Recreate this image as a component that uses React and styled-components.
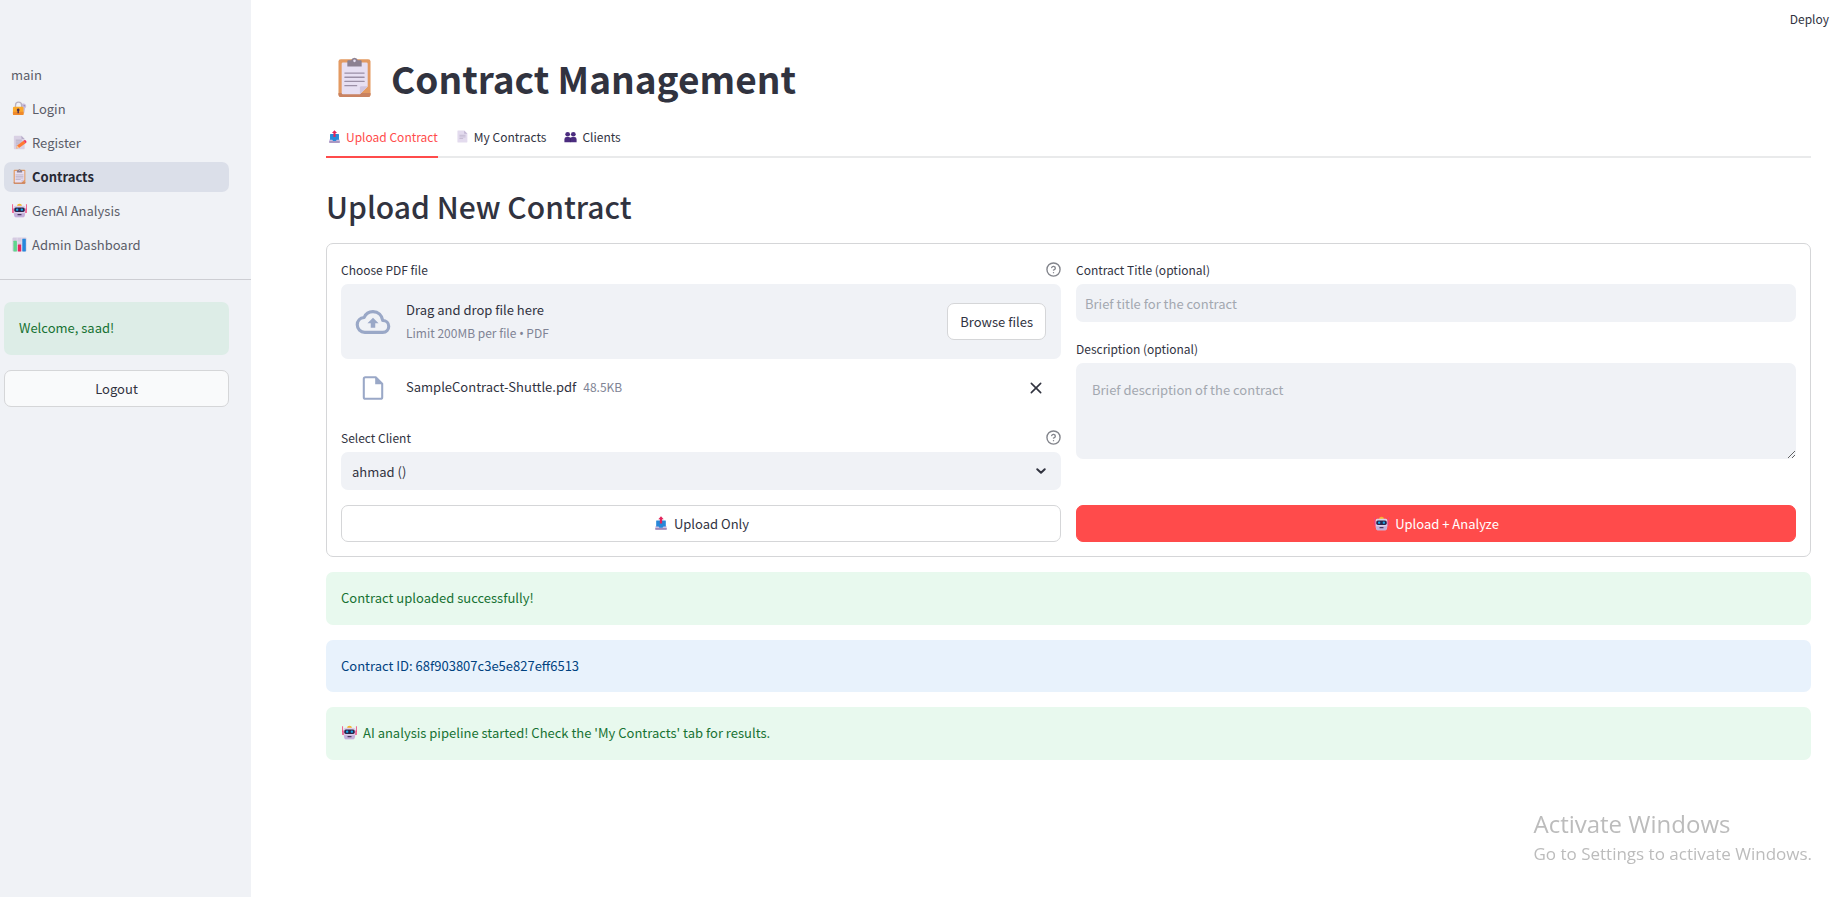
import React, { useState } from "react";
import styled, { createGlobalStyle, css } from "styled-components";

const color = {
  text: "#31333f",
  muted: "#808495",
  faint: "#a3a8b0",
  panel: "#f0f2f6",
  line: "#d5d6d8",
  red: "#ff4b4b",
  icon: "#9aa8c7",
};

const GlobalStyle = createGlobalStyle`
  *, *::before, *::after { box-sizing: border-box; }
  body {
    margin: 0;
    background: #fff;
    color: ${color.text};
    font-family: "Noto Sans CJK SC", "Noto Sans", sans-serif;
    font-size: 13px;
    line-height: 23px;
  }
  button, input, select, textarea { font: inherit; color: inherit; }
  h1, h2, p { margin: 0; }
`;

/* ---------- emoji drawings ---------- */

const Emoji = styled.svg.attrs({ viewBox: "0 0 32 32", "aria-hidden": true })`
  flex: none;
  display: block;
  width: ${(p) => p.$size || 15}px;
  height: ${(p) => p.$size || 15}px;
  margin: 0 1px;
`;

const Clipboard = ({ size }) => (
  <Emoji $size={size}>
    <rect x="3.5" y="1.8" width="25" height="29.4" rx="1.8" fill="#e39a62" />
    <path d="M3.5 28h25v1.4a1.8 1.8 0 0 1-1.8 1.8H5.3a1.8 1.8 0 0 1-1.8-1.8z" fill="#c98261" />
    <path d="M7 4.300h18.300a1 1 0 0 1 1 1V23L20.200 29H7a1 1 0 0 1-1-1V5.300a1 1 0 0 1 1-1z" fill="#e7dff2" />
    <path d="M20.200 29v-5.200a1 1 0 0 1 1-1h5.100z" fill="#cfc3de" />
    <path d="M13.400 2.600a2.700 2.700 0 0 1 5.200 0h2.200a.8.8 0 0 1 .8.8v4.100H10.400V3.400a.8.8 0 0 1 .8-.8z" fill="#8c8091" />
    <circle cx="16" cy="3" r="1" fill="#e7dff2" />
    <path d="M8.500 12.500h15M8.500 15.800h15M8.500 19.100h15M8.500 22.400h9.200" stroke="#9b8fa6" strokeWidth="1" strokeLinecap="round" />
  </Emoji>
);

const LockKey = () => (
  <Emoji>
    <path d="M25 5.500a5.500 5.500 0 0 1 3 10l-1.500 9-3 3.500-3-4V6.800a5 5 0 0 1 4.500-1.300z" fill="#c9bddb" />
    <circle cx="26" cy="10" r="1.500" fill="#8f83a6" />
    <path d="M7.500 14V9a6.500 6.500 0 0 1 13 0v5" fill="none" stroke="#b9b2c2" strokeWidth="2.800" />
    <rect x="2" y="12.500" width="22.500" height="17.500" rx="2.500" fill="#fba92c" />
    <path d="M2 23h22.500v4.500A2.500 2.500 0 0 1 22 30H4.500A2.500 2.500 0 0 1 2 27.500z" fill="#f08a2b" />
    <path d="M13.200 16.200a2.900 2.900 0 0 1 1.500 5.400V26h-3v-4.400a2.900 2.900 0 0 1 1.500-5.400z" fill="#4a3050" />
  </Emoji>
);

const Memo = () => (
  <Emoji>
    <path d="M5.500 1.500H20l7 7V29a1.500 1.500 0 0 1-1.500 1.500h-20A1.500 1.500 0 0 1 4 29V3a1.500 1.500 0 0 1 1.500-1.500z" fill="#d9d1e4" />
    <path d="M20 1.500l7 7h-5.500A1.500 1.500 0 0 1 20 7z" fill="#b8adc9" />
    <path d="M8 11h13M8 15h13M8 19h8M8 23h5" stroke="#a79bb5" strokeWidth="1.400" />
    <path d="M9 29l2-6.500L24.500 12.500l4.500 5L15.500 27.300z" fill="#ff7a32" />
    <path d="M24.500 12.500l2-1.400c2-1.400 5.500 2.800 4.200 4.700L29 17.500z" fill="#f0325f" />
    <path d="M9 29l2-6.500 4.500 4.800z" fill="#f4c9a2" />
  </Emoji>
);

const Robot = () => (
  <Emoji>
    <path d="M1.200 3.500v10M30.800 3.500v10" stroke="#f0427c" strokeWidth="1.800" strokeLinecap="round" />
    <rect x="0.500" y="11.500" width="5" height="10" rx="1.500" fill="#f0427c" />
    <rect x="26.500" y="11.500" width="5" height="10" rx="1.500" fill="#f0427c" />
    <path d="M11 5.500a5 3.800 0 0 1 10 0v2H11z" fill="#f6b52e" />
    <path d="M7 6h18a3.500 3.500 0 0 1 3.500 3.500V20c0 3-1 10.500-4.500 10.500H8C4.500 30.500 3.500 23 3.500 20V9.500A3.500 3.500 0 0 1 7 6z" fill="#dccfe8" />
    <path d="M4 22h24c-.5 4-1.500 8.500-4 8.500H8C5.500 30.500 4.500 26 4 22z" fill="#c3aeda" />
    <rect x="4.800" y="9.500" width="22.400" height="9.500" rx="3.500" fill="#29234a" />
    <circle cx="11" cy="14.200" r="2.500" fill="#1ba8e8" />
    <circle cx="21" cy="14.200" r="2.500" fill="#1ba8e8" />
    <rect x="11.500" y="23.500" width="9" height="2.800" rx="1.400" fill="#4c3a61" />
  </Emoji>
);

const BarChart = () => (
  <Emoji>
    <rect x="1" y="1" width="30" height="30" rx="2.500" fill="#d5cbe1" />
    <path d="M1 11h30M1 21h30M11 1v30M21 1v30" stroke="#eee9f4" strokeWidth="1" />
    <rect x="3" y="8" width="7.500" height="23" rx="1" fill="#5fd68c" />
    <rect x="12.500" y="16" width="7" height="15" rx="1" fill="#e7265e" />
    <rect x="22" y="3.500" width="7.500" height="27.500" rx="1" fill="#2588dc" />
  </Emoji>
);

const Outbox = ({ size }) => (
  <Emoji $size={size}>
    <path d="M5 23l2.500-3h17l2.500 3 2 1v6a1.500 1.500 0 0 1-1.500 1.500h-23A1.500 1.500 0 0 1 3 30v-6z" fill="#cdbfe0" />
    <path d="M3 27.500h26V30a1.500 1.500 0 0 1-1.500 1.500h-23A1.500 1.500 0 0 1 3 30z" fill="#9d88b9" />
    <path d="M6 10h20a1 1 0 0 1 1 1v13h-5.500l-2 3h-7l-2-3H5V11a1 1 0 0 1 1-1z" fill="#2788d9" />
    <path d="M16 .8l6.200 6.700H18.600V17h-5.200V7.500H9.800z" fill="#e3245b" />
  </Emoji>
);

const PageIcon = ({ size }) => (
  <Emoji $size={size}>
    <path d="M4.500 1.500H20l8 8V29.500a1 1 0 0 1-1 1h-22.500a1 1 0 0 1-1-1V2.500a1 1 0 0 1 1-1z" fill="#e3dbee" />
    <path d="M20 1.500l8 8h-7a1 1 0 0 1-1-1z" fill="#c4b8d5" />
    <path d="M8.500 13h15M8.500 17h15M8.500 21h9" stroke="#aba0bb" strokeWidth="1.300" />
  </Emoji>
);

const People = ({ size }) => (
  <Emoji $size={size}>
    <circle cx="9" cy="10.500" r="5.800" fill="#4b2c7f" />
    <circle cx="23" cy="10.500" r="5.800" fill="#4b2c7f" />
    <path d="M1 30v-7.500A5.500 5.500 0 0 1 6.500 17h5a5.500 5.500 0 0 1 4.500 2.300A5.500 5.500 0 0 1 20.500 17h5a5.500 5.500 0 0 1 5.500 5.500V30z" fill="#4b2c7f" />
    <path d="M16 19.300V30" stroke="#321b5a" strokeWidth="1" />
  </Emoji>
);

/* ---------- line icons ---------- */

const Glyph = styled.svg.attrs({ viewBox: "0 0 24 24", "aria-hidden": true })`
  flex: none;
  display: block;
  width: ${(p) => p.$size}px;
  height: ${(p) => p.$size}px;
`;

const CloudIcon = () => (
  <Glyph $size={36} fill="none">
    <path d="M18.500 11C18 7.500 15.500 5.100 12 5.100c-2.700 0-4.900 1.500-5.900 3.900C3.300 9.200 1.500 11.300 1.500 13.900c0 2.800 2.200 5 5 5h12c2.300 0 4-1.700 4-4 0-2.200-1.800-3.900-4-3.900z" stroke={color.icon} strokeWidth="2.100" strokeLinejoin="round" />
    <path d="M8.300 12.900h2.200v2.900h3v-2.900h2.200L12 9.200z" fill={color.icon} />
  </Glyph>
);

const FileIcon = () => (
  <Glyph $size={26}>
    <path d="M5 2h9.500L20.500 8v12.500A1.500 1.500 0 0 1 19 22H5a1.500 1.500 0 0 1-1.500-1.500v-17A1.500 1.500 0 0 1 5 2z" fill="none" stroke={color.icon} strokeWidth="1.900" strokeLinejoin="round" />
    <path d="M14 2v6.500h6.500z" fill={color.icon} />
  </Glyph>
);

const CloseIcon = () => (
  <Glyph $size={16}>
    <path d="M5 5l14 14M19 5l-14 14" stroke={color.text} strokeWidth="2.400" strokeLinecap="round" />
  </Glyph>
);

const HelpIcon = () => (
  <Glyph $size={15} fill="none" stroke="#83858c" strokeWidth="2.200" strokeLinecap="round" strokeLinejoin="round">
    <circle cx="12" cy="12" r="10.500" />
    <path d="M9.090 9a3 3 0 0 1 5.830 1c0 2-3 3-3 3M12 17h.01" />
  </Glyph>
);

const ChevronIcon = () => (
  <Glyph $size={12}>
    <path d="M4.500 8.500l7.500 7 7.500-7" fill="none" stroke={color.text} strokeWidth="4" strokeLinecap="round" strokeLinejoin="round" />
  </Glyph>
);

/* ---------- shell ---------- */

const Shell = styled.div`
  display: flex;
  min-height: 100vh;
`;

const Sidebar = styled.aside`
  flex: 0 0 251px;
  background: ${color.panel};
  padding-top: 60px;
`;

const Nav = styled.nav`
  display: flex;
  flex-direction: column;
  gap: 4px;
  padding: 0 22px 0 4px;
`;

const NavLink = styled.a`
  display: flex;
  align-items: center;
  gap: 4px;
  height: 30px;
  padding: 0 7px 2px;
  border-radius: 7px;
  color: #5b5d68;
  text-decoration: none;
  ${(p) =>
    p.$active &&
    css`
      background: #dbdfe9;
      color: #262833;
      font-weight: 600;
    `}
`;

const Divider = styled.hr`
  margin: 19px 0 22px;
  border: 0;
  border-top: 1px solid #cdced3;
`;

const SidebarBody = styled.div`
  display: flex;
  flex-direction: column;
  gap: 15px;
  padding: 0 22px 0 4px;
`;

const Main = styled.main`
  flex: 1;
  min-width: 0;
  display: flex;
  flex-direction: column;
  padding: 0 29px 40px 75px;
`;

const TopBar = styled.header`
  display: flex;
  justify-content: flex-end;
  height: 38px;
  margin-right: -18px;
`;

const DeployButton = styled.button`
  height: 37px;
  padding: 0;
  border: 0;
  background: none;
  font-size: 12px;
`;

const Title = styled.h1`
  display: flex;
  align-items: center;
  gap: 15px;
  height: 80px;
  padding: 0 0 1px 7px;
  font-size: 37px;
  line-height: 48px;
  font-weight: 700;
`;

const Tabs = styled.div`
  display: flex;
  gap: 16px;
  height: 40px;
  border-bottom: 2px solid #e9eaeb;
`;

const Tab = styled.button`
  display: flex;
  align-items: center;
  gap: 4px;
  height: 40px;
  padding: 0 0 1px 1px;
  border: 0;
  border-bottom: 2px solid ${(p) => (p.$active ? color.red : "transparent")};
  background: none;
  color: ${(p) => (p.$active ? color.red : color.text)};
  font-size: 12px;
`;

const Heading = styled.h2`
  margin: 28px 0 16px;
  font-size: 30px;
  line-height: 41px;
  font-weight: 500;
`;

/* ---------- form ---------- */

const Card = styled.form`
  display: flex;
  flex-direction: column;
  gap: 15px;
  padding: 14px;
  border: 1px solid ${color.line};
  border-radius: 7px;
`;

const Columns = styled.div`
  display: grid;
  grid-template-columns: 1fr 1fr;
  gap: 15px;
`;

const Column = styled.div`
  display: flex;
  flex-direction: column;
  gap: 15px;
`;

const Field = styled.div`
  display: flex;
  flex-direction: column;
`;

const LabelRow = styled.div`
  display: flex;
  align-items: center;
  justify-content: space-between;
  height: 26px;
  padding-bottom: 4px;
`;

const Label = styled.label`
  font-size: 12px;
`;

const HelpButton = styled.button`
  padding: 0;
  border: 0;
  background: none;
`;

const Button = styled.button`
  display: flex;
  align-items: center;
  justify-content: center;
  gap: 5px;
  height: 37px;
  padding: 0 12px 1px;
  border: 1px solid ${(p) => (p.$primary ? color.red : color.line)};
  border-radius: 7px;
  background: ${(p) => (p.$primary ? color.red : p.$soft ? "#f9fafb" : "#fff")};
  color: ${(p) => (p.$primary ? "#fff" : color.text)};
`;

const Dropzone = styled.div`
  display: flex;
  align-items: center;
  gap: 15px;
  height: 75px;
  padding: 0 15px 0 14px;
  border-radius: 7px;
  background: ${color.panel};
`;

const DropText = styled.div`
  flex: 1;
`;

const Hint = styled.p`
  color: ${color.muted};
  font-size: 12px;
`;

const Bullet = styled.span`
  font-family: "Noto Sans", sans-serif;
`;

const FileRow = styled.div`
  display: flex;
  align-items: center;
  gap: 7px;
  height: 52px;
  padding: 6px 17px 0 19px;
`;

const FileName = styled.span`
  margin-left: 13px;
  padding-bottom: 4px;
`;

const FileSize = styled.span`
  flex: 1;
  padding-bottom: 4px;
  color: ${color.muted};
  font-size: 12px;
`;

const RemoveButton = styled.button`
  padding: 0;
  border: 0;
  background: none;
`;

const control = css`
  width: 100%;
  border: 0;
  border-radius: 7px;
  background: ${color.panel};
  outline: none;
  &::placeholder { color: ${color.faint}; opacity: 1; }
`;

const TextInput = styled.input`
  ${control}
  height: 38px;
  padding: 0 9px;
`;

const TextArea = styled.textarea`
  ${control}
  display: block;
  height: 96px;
  padding: 15px 16px;
  resize: vertical;
`;

const SelectWrap = styled.div`
  display: grid;
  align-items: center;
  & > * { grid-area: 1 / 1; }
  & > svg { justify-self: end; margin-right: 14px; pointer-events: none; }
`;

const Select = styled.select`
  ${control}
  appearance: none;
  height: 38px;
  padding: 0 11px;
`;

/* ---------- messages ---------- */

const Messages = styled.div`
  display: flex;
  flex-direction: column;
  gap: 15px;
  margin-top: 15px;
`;

const tones = {
  success: ["#e8f9ee", "#177233"],
  info: ["#e8f2fc", "#004280"],
  sidebar: ["#ddede7", "#177233"],
};

const Alert = styled.div`
  display: flex;
  align-items: center;
  gap: 5px;
  min-height: ${(p) => (p.$tone === "info" ? 52 : 53)}px;
  padding: 0 15px 2px;
  border-radius: 7px;
  background: ${(p) => tones[p.$tone][0]};
  color: ${(p) => tones[p.$tone][1]};
`;

const Watermark = styled.div`
  position: fixed;
  right: 28px;
  bottom: 30px;
  color: #bcbcbc;
  font-family: "Open Sans", "Noto Sans", sans-serif;
  pointer-events: none;
`;

const WatermarkTitle = styled.p`
  font-size: 24px;
  line-height: 34px;
`;

const WatermarkText = styled.p`
  font-size: 17px;
  line-height: 26px;
`;

const pages = [
  { name: "main" },
  { name: "Login", Icon: LockKey },
  { name: "Register", Icon: Memo },
  { name: "Contracts", Icon: Clipboard },
  { name: "GenAI Analysis", Icon: Robot },
  { name: "Admin Dashboard", Icon: BarChart },
];

const tabs = [
  { name: "Upload Contract", Icon: Outbox },
  { name: "My Contracts", Icon: PageIcon },
  { name: "Clients", Icon: People },
];

export default function App() {
  const [tab, setTab] = useState("Upload Contract");
  return (
    <>
      <GlobalStyle />
      <Shell>
        <Sidebar>
          <Nav aria-label="Pages">
            {pages.map(({ name, Icon }) => (
              <NavLink key={name} href="#" $active={name === "Contracts"}>
                {Icon && <Icon />}
                {name}
              </NavLink>
            ))}
          </Nav>
          <Divider />
          <SidebarBody>
            <Alert $tone="sidebar">Welcome, saad!</Alert>
            <Button type="button" $soft>Logout</Button>
          </SidebarBody>
        </Sidebar>

        <Main>
          <TopBar>
            <DeployButton type="button">Deploy</DeployButton>
          </TopBar>
          <Title>
            <Clipboard size={41} />
            Contract Management
          </Title>
          <Tabs role="tablist">
            {tabs.map(({ name, Icon }) => (
              <Tab
                key={name}
                type="button"
                role="tab"
                aria-selected={tab === name}
                $active={tab === name}
                onClick={() => setTab(name)}
              >
                <Icon size={13} />
                {name}
              </Tab>
            ))}
          </Tabs>
          <Heading>Upload New Contract</Heading>

          <Card onSubmit={(e) => e.preventDefault()}>
            <Columns>
              <Column>
                <Field>
                  <LabelRow>
                    <Label htmlFor="pdf">Choose PDF file</Label>
                    <HelpButton type="button" aria-label="Help for file"><HelpIcon /></HelpButton>
                  </LabelRow>
                  <Dropzone>
                    <CloudIcon />
                    <DropText>
                      <p>Drag and drop file here</p>
                      <Hint>Limit 200MB per file <Bullet>•</Bullet> PDF</Hint>
                    </DropText>
                    <Button type="button" id="pdf">Browse files</Button>
                  </Dropzone>
                  <FileRow>
                    <FileIcon />
                    <FileName>SampleContract-Shuttle.pdf</FileName>
                    <FileSize>48.5KB</FileSize>
                    <RemoveButton type="button" aria-label="Remove file"><CloseIcon /></RemoveButton>
                  </FileRow>
                </Field>
                <Field>
                  <LabelRow>
                    <Label htmlFor="client">Select Client</Label>
                    <HelpButton type="button" aria-label="Help for client"><HelpIcon /></HelpButton>
                  </LabelRow>
                  <SelectWrap>
                    <Select id="client" defaultValue="ahmad">
                      <option value="ahmad">ahmad ()</option>
                    </Select>
                    <ChevronIcon />
                  </SelectWrap>
                </Field>
              </Column>
              <Column>
                <Field>
                  <LabelRow>
                    <Label htmlFor="title">Contract Title (optional)</Label>
                  </LabelRow>
                  <TextInput id="title" placeholder="Brief title for the contract" />
                </Field>
                <Field>
                  <LabelRow>
                    <Label htmlFor="description">Description (optional)</Label>
                  </LabelRow>
                  <TextArea id="description" placeholder="Brief description of the contract" />
                </Field>
              </Column>
            </Columns>
            <Columns>
              <Button type="submit"><Outbox size={14} />Upload Only</Button>
              <Button type="submit" $primary><Robot />Upload + Analyze</Button>
            </Columns>
          </Card>

          <Messages>
            <Alert $tone="success">Contract uploaded successfully!</Alert>
            <Alert $tone="info">Contract ID: 68f903807c3e5e827eff6513</Alert>
            <Alert $tone="success">
              <Robot />
              AI analysis pipeline started! Check the 'My Contracts' tab for results.
            </Alert>
          </Messages>
        </Main>
      </Shell>
      <Watermark>
        <WatermarkTitle>Activate Windows</WatermarkTitle>
        <WatermarkText>Go to Settings to activate Windows.</WatermarkText>
      </Watermark>
    </>
  );
}
